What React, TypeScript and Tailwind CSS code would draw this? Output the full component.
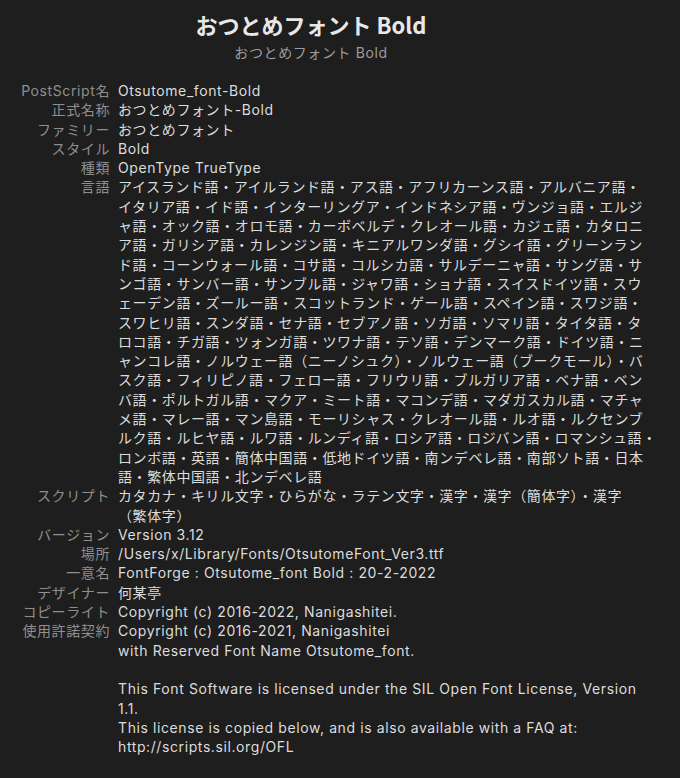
const languageLines = [
  "アイスランド語・アイルランド語・アス語・アフリカーンス語・アルバニア語・",
  "イタリア語・イド語・インターリングア・インドネシア語・ヴンジョ語・エルジ",
  "ャ語・オック語・オロモ語・カーボベルデ・クレオール語・カジェ語・カタロニ",
  "ア語・ガリシア語・カレンジン語・キニアルワンダ語・グシイ語・グリーンラン",
  "ド語・コーンウォール語・コサ語・コルシカ語・サルデーニャ語・サング語・サ",
  "ンゴ語・サンバー語・サンブル語・ジャワ語・ショナ語・スイスドイツ語・スウ",
  "ェーデン語・ズールー語・スコットランド・ゲール語・スペイン語・スワジ語・",
  "スワヒリ語・スンダ語・セナ語・セブアノ語・ソガ語・ソマリ語・タイタ語・タ",
  "ロコ語・チガ語・ツォンガ語・ツワナ語・テソ語・デンマーク語・ドイツ語・ニ",
  "ャンコレ語・ノルウェー語（ニーノシュク）・ノルウェー語（ブークモール）・バ",
  "スク語・フィリピノ語・フェロー語・フリウリ語・ブルガリア語・ベナ語・ベン",
  "バ語・ポルトガル語・マクア・ミート語・マコンデ語・マダガスカル語・マチャ",
  "メ語・マレー語・マン島語・モーリシャス・クレオール語・ルオ語・ルクセンブ",
  "ルク語・ルヒヤ語・ルワ語・ルンディ語・ロシア語・ロジバン語・ロマンシュ語・",
  "ロンボ語・英語・簡体中国語・低地ドイツ語・南ンデベレ語・南部ソト語・日本",
  "語・繁体中国語・北ンデベレ語",
];

const rows: { label: string; lines: string[] }[] = [
  { label: "PostScript名", lines: ["Otsutome_font-Bold"] },
  { label: "正式名称", lines: ["おつとめフォント-Bold"] },
  { label: "ファミリー", lines: ["おつとめフォント"] },
  { label: "スタイル", lines: ["Bold"] },
  { label: "種類", lines: ["OpenType TrueType"] },
  { label: "言語", lines: languageLines },
  {
    label: "スクリプト",
    lines: ["カタカナ・キリル文字・ひらがな・ラテン文字・漢字・漢字（簡体字）・漢字", "（繁体字）"],
  },
  { label: "バージョン", lines: ["Version 3.12"] },
  { label: "場所", lines: ["/Users/x/Library/Fonts/OtsutomeFont_Ver3.ttf"] },
  { label: "一意名", lines: ["FontForge : Otsutome_font Bold : 20-2-2022"] },
  { label: "デザイナー", lines: ["何某亭"] },
  { label: "コピーライト", lines: ["Copyright (c) 2016-2022, Nanigashitei."] },
  {
    label: "使用許諾契約",
    lines: [
      "Copyright (c) 2016-2021, Nanigashitei",
      "with Reserved Font Name Otsutome_font.",
      "",
      "This Font Software is licensed under the SIL Open Font License, Version",
      "1.1.",
      "This license is copied below, and is also available with a FAQ at:",
      "http://scripts.sil.org/OFL",
    ],
  },
];

export default function App() {
  return (
    <div className="w-[680px] h-[778px] overflow-hidden bg-[#1e1e1e] font-['Inter','Noto_Sans_CJK_JP',sans-serif] text-[14px] leading-[19.3px] tracking-[0.6px]">
      <div className="pt-[11px] pr-[58px] flex flex-col items-center">
        <div className="text-[22px] leading-[26px] font-bold tracking-[0px] text-[#e8e8e8] font-['Noto_Sans_CJK_JP',sans-serif]">
          おつとめフォント Bold
        </div>
        <div className="mt-[7px] text-[14px] leading-[18px] text-[#9b9b9b]">おつとめフォント Bold</div>
      </div>

      <div className="mt-[19px] grid grid-cols-[110px_1fr] gap-x-[8px]">
        {rows.map((row) => (
          <div key={row.label} className="contents">
            <div className="text-right text-[#8f8f8f] whitespace-nowrap">{row.label}</div>
            <div className="text-[#dcdcdc]">
              {row.lines.map((line, i) => (
                <div key={i} className="whitespace-nowrap h-[19.3px]">
                  {line}
                </div>
              ))}
            </div>
          </div>
        ))}
      </div>
    </div>
  );
}
